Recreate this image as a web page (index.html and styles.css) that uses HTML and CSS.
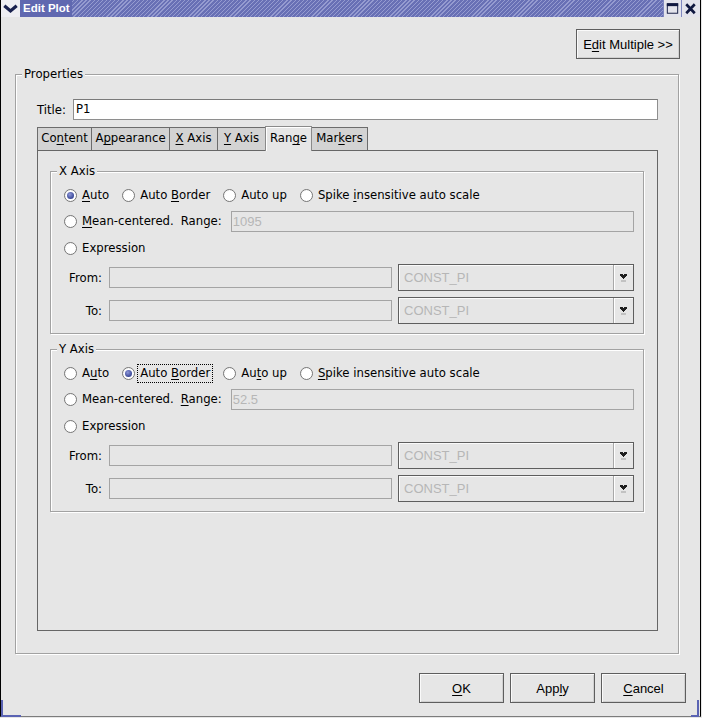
FILE: index.html
```html
<!DOCTYPE html>
<html>
<head>
<meta charset="utf-8">
<title>Edit Plot</title>
<link rel="stylesheet" href="styles.css">
</head>
<body>
<div class="window">
  <div class="titlebar">
    <div class="tb-menu">
      <svg width="20" height="17" viewBox="0 0 20 17"><path d="M3.5 5.5l6.5 5.5 6.5-5.5" fill="none" stroke="#18204e" stroke-width="3.4"/></svg>
    </div>
    <div class="tb-title">Edit Plot</div>
    <div class="tb-fill"></div>
    <div class="tb-btn">
      <svg width="18" height="17" viewBox="0 0 18 17"><rect x="3.5" y="3.5" width="11" height="10" fill="none" stroke="#101840"/><rect x="3" y="3" width="12" height="3" fill="#101840"/></svg>
    </div>
    <div class="tb-btn">
      <svg width="18" height="17" viewBox="0 0 18 17"><path d="M4.5 4l9 9.5M13.5 4l-9 9.5" stroke="#101840" stroke-width="2.8"/></svg>
    </div>
    <div class="tb-end"></div>
  </div>

  <div class="client">
    <div class="top-row">
      <button class="btn btn-multi">E<u>d</u>it Multiple &gt;&gt;</button>
    </div>

    <div class="group props">
      <span class="legend">Properties</span>
      <div class="title-row">
        <span class="title-label">Title:</span>
        <div class="text-input">P1</div>
      </div>

      <div class="tabs">
        <div class="tab t-content">Co<u>n</u>tent</div>
        <div class="tab t-appearance">A<u>p</u>pearance</div>
        <div class="tab t-xaxis"><u>X</u> Axis</div>
        <div class="tab t-yaxis"><u>Y</u> Axis</div>
        <div class="tab t-range active">Ran<u>g</u>e</div>
        <div class="tab t-markers">Mar<u>k</u>ers</div>
      </div>

      <div class="panel">
        <div class="group axis">
          <span class="legend">X Axis</span>
          <div class="row r1">
            <div class="opt"><span class="radio on"></span><span class="opt-label"><u>A</u>uto</span></div>
            <div class="opt"><span class="radio"></span><span class="opt-label">Auto <u>B</u>order</span></div>
            <div class="opt"><span class="radio"></span><span class="opt-label">Auto up</span></div>
            <div class="opt"><span class="radio"></span><span class="opt-label">Spike <u>i</u>nsensitive auto scale</span></div>
          </div>
          <div class="row r2">
            <div class="opt"><span class="radio"></span><span class="opt-label"><u>M</u>ean-centered.</span></div>
            <span class="range-label">Range:</span>
            <div class="dis-input range-input">1095</div>
          </div>
          <div class="row r3">
            <div class="opt"><span class="radio"></span><span class="opt-label">Expression</span></div>
          </div>
          <div class="row r4">
            <span class="lbl">From:</span>
            <div class="dis-input expr-input"></div>
            <div class="combo"><span class="combo-text">CONST_PI</span><span class="combo-btn"><svg width="7" height="8" viewBox="0 0 7 8"><path d="M0 0h3v1h1v-1h3v2h-1v1h-1v1h-1v1h-1v-1h-1v-1h-1v-1h-1z" fill="#1e1e1e"/><rect x="1" y="6" width="5" height="2" fill="#c2c2c2"/></svg></span></div>
          </div>
          <div class="row r5">
            <span class="lbl">To:</span>
            <div class="dis-input expr-input"></div>
            <div class="combo"><span class="combo-text">CONST_PI</span><span class="combo-btn"><svg width="7" height="8" viewBox="0 0 7 8"><path d="M0 0h3v1h1v-1h3v2h-1v1h-1v1h-1v1h-1v-1h-1v-1h-1v-1h-1z" fill="#1e1e1e"/><rect x="1" y="6" width="5" height="2" fill="#c2c2c2"/></svg></span></div>
          </div>
        </div>

        <div class="group axis y">
          <span class="legend">Y Axis</span>
          <div class="row r1">
            <div class="opt"><span class="radio"></span><span class="opt-label">A<u>u</u>to</span></div>
            <div class="opt"><span class="radio on"></span><span class="opt-label focus">Auto <u>B</u>order</span></div>
            <div class="opt"><span class="radio"></span><span class="opt-label">Au<u>t</u>o up</span></div>
            <div class="opt"><span class="radio"></span><span class="opt-label"><u>S</u>pike insensitive auto scale</span></div>
          </div>
          <div class="row r2">
            <div class="opt"><span class="radio"></span><span class="opt-label">Mean-centered.</span></div>
            <span class="range-label"><u>R</u>ange:</span>
            <div class="dis-input range-input">52.5</div>
          </div>
          <div class="row r3">
            <div class="opt"><span class="radio"></span><span class="opt-label">Expression</span></div>
          </div>
          <div class="row r4">
            <span class="lbl">From:</span>
            <div class="dis-input expr-input"></div>
            <div class="combo"><span class="combo-text">CONST_PI</span><span class="combo-btn"><svg width="7" height="8" viewBox="0 0 7 8"><path d="M0 0h3v1h1v-1h3v2h-1v1h-1v1h-1v1h-1v-1h-1v-1h-1v-1h-1z" fill="#1e1e1e"/><rect x="1" y="6" width="5" height="2" fill="#c2c2c2"/></svg></span></div>
          </div>
          <div class="row r5">
            <span class="lbl">To:</span>
            <div class="dis-input expr-input"></div>
            <div class="combo"><span class="combo-text">CONST_PI</span><span class="combo-btn"><svg width="7" height="8" viewBox="0 0 7 8"><path d="M0 0h3v1h1v-1h3v2h-1v1h-1v1h-1v1h-1v-1h-1v-1h-1v-1h-1z" fill="#1e1e1e"/><rect x="1" y="6" width="5" height="2" fill="#c2c2c2"/></svg></span></div>
          </div>
        </div>
      </div>
    </div>

    <div class="buttons">
      <button class="btn btn-dlg"><u>O</u>K</button>
      <button class="btn btn-dlg">App<u>l</u>y</button>
      <button class="btn btn-dlg"><u>C</u>ancel</button>
    </div>
  </div>

  <span class="corner corner-bl"></span>
  <span class="corner corner-br"></span>
</div>
</body>
</html>
```

FILE: styles.css
```css
* { box-sizing: border-box; }
html, body { margin: 0; padding: 0; }
body {
  width: 702px;
  height: 718px;
  overflow: hidden;
  background: #e6e6e6;
  font-family: "DejaVu Sans", sans-serif;
  font-size: 11.7px;
  color: #000;
}
u { text-underline-offset: 2px; text-decoration-thickness: 1px; }

.window {
  position: relative;
  width: 701px;
  height: 717px;
  background: #e6e6e6;
  border-left: 1px solid #000;
  border-right: 1px solid #000;
  border-bottom: 1px solid #7c7c7c;
  display: flex;
  flex-direction: column;
}

/* title bar */
.titlebar {
  height: 17px;
  display: flex;
  background: repeating-linear-gradient(135deg, #6870b5 0 2px, #959bd0 2px 2.9px);
}
.tb-menu { width: 19px; background: #eeeef2; display: flex; }
.tb-title {
  background: #6068b0;
  color: #fff;
  font-family: "Liberation Sans", sans-serif;
  font-weight: bold;
  font-size: 11.5px;
  line-height: 17px;
  padding: 0 2px 0 3px;
}
.tb-fill { flex: 1; }
.tb-btn {
  width: 18px;
  background: #e4e4ec;
  border-left: 1px solid #8088c0;
  display: flex;
}
.tb-end { width: 1px; background: #e4e4ec; }

.client { flex: 1; display: flex; flex-direction: column; }

.top-row {
  display: flex;
  justify-content: flex-end;
  padding: 12px 20px 0 0;
}

.btn {
  font-family: "Liberation Sans", sans-serif;
  font-size: 13px;
  color: #000;
  background: #e6e6e6;
  border: 1px solid #5e5e5e;
  box-shadow: inset 1px 1px 0 #fafafa, inset -1px -1px 0 #d0d0d0;
  height: 30px;
  padding: 0;
  margin: 0;
  white-space: nowrap;
}
.btn-multi { width: 104px; }
.btn-dlg { width: 85px; }

/* group boxes */
.group {
  position: relative;
  border: 1px solid #a2a2a2;
  box-shadow: inset 1px 1px 0 #fff, 1px 1px 0 #fff;
}
.legend {
  position: absolute;
  top: -8px;
  left: 6px;
  padding: 0 2px;
  line-height: 14px;
  background: #e6e6e6;
  white-space: nowrap;
}

.props {
  margin: 15px 21px 0 14px;
  padding: 24px 20px 22px 21px;
}

.title-row { display: flex; align-items: center; height: 21px; }
.title-label { width: 36px; flex-shrink: 0; }
.text-input {
  flex: 1;
  height: 21px;
  background: #fff;
  border: 1px solid #8e8e8e;
  border-top-color: #7a7a7a;
  padding-left: 2px;
  line-height: 19px;
}

/* tabs */
.tabs {
  display: flex;
  align-items: flex-end;
  height: 24px;
  margin-top: 6px;
}
.tab {
  height: 23px;
  line-height: 21px;
  text-align: center;
  white-space: nowrap;
  flex-shrink: 0;
  background: #d3d3d3;
  border: 1px solid #6c6c6c;
  border-bottom: none;
  margin-left: -1px;
}
.tab:first-child { margin-left: 0; }
.t-content { width: 55px; }
.t-appearance { width: 79px; }
.t-xaxis { width: 49px; }
.t-yaxis { width: 49px; }
.t-range { width: 47px; }
.t-markers { width: 57px; }
.tab.active {
  position: relative;
  z-index: 1;
  height: 25px;
  margin-bottom: -1px;
  line-height: 23px;
  background: #e6e6e6;
  border-color: #8a8a8a;
  box-shadow: inset 1px 1px 0 #fff;
}

.panel {
  height: 481px;
  border: 1px solid #666;
  padding: 20px 13px 0 12px;
}

.axis { padding: 10px 9px 9px 13px; }
.axis.y { margin-top: 15px; }

.row { display: flex; align-items: center; }
.row > * { flex-shrink: 0; white-space: nowrap; }
.r1, .r2 { height: 26px; }
.r3 { height: 28px; }
.r4 { height: 27px; margin-top: 2px; }
.r5 { height: 27px; margin-top: 6px; }

.opt { display: flex; align-items: center; margin-right: 10px; }
.r2 .opt { margin-right: 0; }
.radio {
  width: 13px;
  height: 13px;
  flex-shrink: 0;
  border-radius: 50%;
  border: 1px solid #777;
  background: radial-gradient(circle at 60% 60%, #fff 0 55%, #e8e8e8 100%);
  display: flex;
  align-items: center;
  justify-content: center;
}
.radio.on::after {
  content: "";
  width: 7px;
  height: 7px;
  border-radius: 50%;
  background: radial-gradient(circle at 40% 35%, #8f98d8 0, #3a4898 70%);
}
.opt-label {
  margin-left: 2px;
  padding: 0 2px;
  line-height: 17px;
  border: 1px dotted transparent;
}
.opt-label.focus { border-color: #000; }

.range-label { margin-left: 4px; margin-right: 9px; }
.dis-input {
  height: 21px;
  background: #e6e6e6;
  border: 1px solid #a4a4a4;
  font-family: "Liberation Sans", sans-serif;
  font-size: 13px;
  color: #b6b6b6;
  line-height: 19px;
  padding-left: 1px;
}
.row > .range-input { flex: 1 1 0; min-width: 0; }
.expr-input { width: 283px; }

.lbl { width: 38px; text-align: right; margin-right: 7px; }

.combo {
  width: 236px;
  height: 27px;
  margin-left: 6px;
  border: 1px solid #5e5e5e;
  box-shadow: inset 1px 1px 0 #fafafa;
  display: flex;
  align-items: center;
}
.combo-text {
  flex: 1;
  padding-left: 5px;
  font-family: "Liberation Sans", sans-serif;
  font-size: 13px;
  color: #b6b6b6;
}
.combo-btn {
  width: 20px;
  height: 25px;
  border-left: 1px solid #a8a8a8;
  box-shadow: inset 1px 0 0 #fff;
  display: flex;
  align-items: center;
  justify-content: center;
  padding-top: 1px;
}

.buttons {
  display: flex;
  justify-content: flex-end;
  gap: 6px;
  margin-top: 19px;
  padding-right: 14px;
}

.corner { position: absolute; }
.corner-bl { left: 0; bottom: -1px; width: 20px; height: 17px; border-left: 2px solid #5a63b3; border-bottom: 2px solid #5a63b3; }
.corner-br { right: 1px; bottom: -1px; width: 8px; height: 17px; border-right: 2px solid #5a63b3; border-bottom: 2px solid #5a63b3; }
```
